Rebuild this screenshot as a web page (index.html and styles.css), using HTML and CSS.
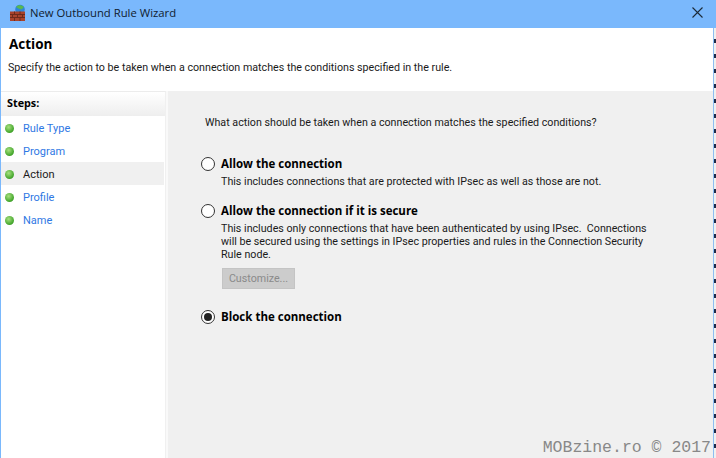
FILE: index.html
```html
<!DOCTYPE html>
<html lang="en">
<head>
<meta charset="utf-8">
<title>New Outbound Rule Wizard</title>
<link rel="stylesheet" href="styles.css">
</head>
<body>
<div class="window">
  <header class="titlebar">
    <svg class="app-icon" width="18" height="18" viewBox="0 0 18 18">
      <circle cx="11" cy="5.500" r="4.800" fill="#2f86d8"/>
      <path d="M7 3c1.500-2.500 5.500-2.500 8 0l-2.500 2.500-3-1z" fill="#58b84f"/>
      <path d="M1 7.500h15v9.500h-15z" fill="#a8432c"/>
      <path d="M1 10.500h15M1 13.500h15M5.500 7.500v3M11 7.500v3M3.500 10.500v3M8.500 10.500v3M13.500 10.500v3M5.500 13.500v3.500M11 13.500v3.500" stroke="#6e2a1b" stroke-width="1" fill="none"/>
    </svg>
    <span class="title">New Outbound Rule Wizard</span>
    <svg class="close" width="11" height="11" viewBox="0 0 11 11">
      <path d="M0.500 0.500l10 10M10.500 0.500l-10 10" stroke="#1c2a38" stroke-width="1.100" fill="none"/>
    </svg>
  </header>
  <section class="banner">
    <h1 class="heading">Action</h1>
    <p class="subtitle">Specify the action to be taken when a connection matches the conditions specified in the rule.</p>
  </section>
  <div class="content">
    <nav class="steps">
      <div class="steps-head">Steps:</div>
      <ul class="step-list">
        <li class="step"><i class="dot"></i>Rule Type</li>
        <li class="step"><i class="dot"></i>Program</li>
        <li class="step current"><i class="dot"></i>Action</li>
        <li class="step"><i class="dot"></i>Profile</li>
        <li class="step"><i class="dot"></i>Name</li>
      </ul>
    </nav>
    <main class="panel">
      <p class="question">What action should be taken when a connection matches the specified conditions?</p>
      <div class="option first">
        <i class="radio"></i>
        <div class="option-body">
          <div class="option-label">Allow the connection</div>
          <p class="option-text">This includes connections that are protected with IPsec as well as those are not.</p>
        </div>
      </div>
      <div class="option second">
        <i class="radio"></i>
        <div class="option-body">
          <div class="option-label">Allow the connection if it is secure</div>
          <p class="option-text">This includes only connections that have been authenticated by using IPsec.&nbsp; Connections<br>will be secured using the settings in IPsec properties and rules in the Connection Security<br>Rule node.</p>
          <div class="button">Customize...</div>
        </div>
      </div>
      <div class="option third">
        <i class="radio checked"></i>
        <div class="option-body">
          <div class="option-label">Block the connection</div>
        </div>
      </div>
      <div class="watermark">MOBzine.ro © 2017</div>
    </main>
  </div>
  <div class="edge"></div>
</div>
</body>
</html>
```

FILE: styles.css
```css
* { box-sizing: border-box; }
html, body { margin: 0; padding: 0; }
body { width: 716px; height: 458px; overflow: hidden; background: #f0f0f0; }
.window {
  position: relative;
  width: 716px; height: 458px; display: flex; flex-direction: column;
  font-family: Roboto, "Liberation Sans", sans-serif; font-size: 10.7px; color: #1a1a1a;
  border-left: 1px solid #7ab8fc; overflow: hidden;
}
.titlebar {
  height: 28px; flex: none; background: #7ab8fc; display: flex; align-items: center;
  padding: 0 13px 3px 9px; margin-left: -1px;
}
.app-icon { margin-right: 3px; flex: none; }
.title { flex: 1; font-family: "Open Sans", sans-serif; font-size: 11.3px; color: #10202f; }
.close { flex: none; }
.banner { height: 63px; flex: none; background: #fff; padding: 7px 0 0 8px; }
.heading { margin: 0; font-family: "Open Sans", sans-serif; font-size: 13.5px; font-weight: 700; line-height: 18px; color: #000; }
.subtitle { margin: 7px 0 0 -1px; line-height: 16px; }
.content { flex: 1; display: flex; background: #f9f9f9; min-height: 0; }
.steps { width: 165px; flex: none; background: #fff; border-top: 1px solid #ececec; border-right: 1px solid #f0f0f0; }
.steps-head {
  height: 24px; padding: 0 0 2px 6px; line-height: 22px; font-family: "Open Sans", sans-serif; font-size: 10.8px; font-weight: 700; color: #000;
  background: linear-gradient(#fff, #eee);
}
.step-list { list-style: none; margin: 0; padding: 0; }
.step {
  height: 23px; display: flex; align-items: center; color: #2f78e4; padding: 2px 0 0 4px;
  width: 163px; font-size: 11px;
}
.step.current { color: #1a1a1a; background: #f0f0f0; }
.dot {
  width: 9px; height: 9px; border-radius: 50%; margin-right: 9px; flex: none;
  background: radial-gradient(circle at 40% 35%, #a8e080, #46a82e 65%, #358a24);
}
.panel { flex: 1; position: relative; padding: 0 0 0 37px; margin-left: 2px; background: #f0f0f0; }
.question { margin: 0; padding-top: 24px; line-height: 16px; }
.option { display: flex; align-items: flex-start; margin-left: -4px; }
.option.first { margin-top: 25px; }
.option.second { margin-top: 15px; }
.option.third { margin-top: 20px; }
.radio {
  width: 14px; height: 14px; border-radius: 50%; border: 1px solid #333; background: #fff;
  flex: none; margin: 1px 6px 0 0; display: flex; align-items: center; justify-content: center;
}
.radio.checked::after { content: ""; width: 8px; height: 8px; border-radius: 50%; background: #222; }
.option-body { flex: 1; min-width: 0; }
.option-label { font-family: "Open Sans", sans-serif; font-size: 11.5px; font-weight: 700; line-height: 16px; color: #000; }
.option-text { margin: 3px 0 0; line-height: 13px; }
.button {
  margin-top: 7px; margin-left: 1px; width: 73px; height: 21px; background: #ccc; border: 1px solid #c4c4c4;
  color: #8a8a8a; line-height: 19px; text-align: center; font-size: 10.7px;
}
.watermark {
  position: absolute; right: 5px; bottom: 2px; font-family: "Liberation Mono", monospace;
  font-size: 16.5px; line-height: 16px; color: #888;
}
.edge {
  position: absolute; top: 28px; right: 0; bottom: 0; width: 3px;
  border-left: 1px solid #8dbdf0;
  background: repeating-linear-gradient(#f0f0f0 0 11px, #1c2a48 11px 15px);
}
```
